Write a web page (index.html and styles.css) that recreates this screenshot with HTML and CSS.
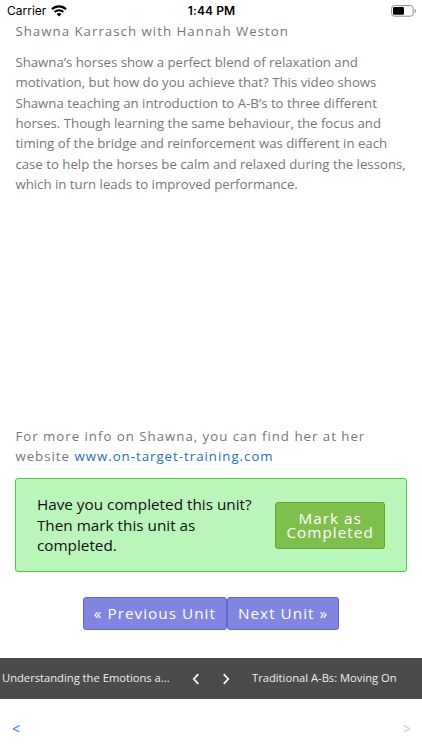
FILE: index.html
```html
<!DOCTYPE html>
<html lang="en">
<head>
    <meta charset="UTF-8">
    <meta name="viewport" content="width=device-width, initial-scale=1.0">
    <title>Shawna Karrasch with Hannah Weston</title>
    <link rel="stylesheet" href="styles.css">
</head>
<body>
    <header class="status-bar">
        <div class="carrier">
            <span>Carrier</span>
            <svg class="wifi" viewBox="0 0 16 12" width="16" height="12">
                <path d="M1 4.2a10 10 0 0 1 14 0" fill="none" stroke="#000" stroke-width="2.2"/>
                <path d="M3.6 7a6.3 6.3 0 0 1 8.8 0" fill="none" stroke="#000" stroke-width="2"/>
                <path d="M5.6 9.1a3.5 3.5 0 0 1 4.8 0L8 11.5z"/>
            </svg>
        </div>
        <div class="time">1:44 PM</div>
        <svg class="battery" viewBox="0 0 26 12" width="26" height="12">
            <rect x="0.6" y="0.6" width="21.6" height="10.6" rx="2.8" fill="none" stroke="#8e8e8e"/>
            <rect x="2" y="2" width="11" height="7.8" rx="1.4"/>
            <path d="M23.6 4v4c.9-.3 1.4-1 1.4-2s-.5-1.7-1.4-2z" fill="#999"/>
        </svg>
    </header>

    <main class="content">
        <h2 class="presenters">Shawna Karrasch with Hannah Weston</h2>
        <p class="description">Shawna’s horses show a perfect blend of relaxation and<br>
            motivation, but how do you achieve that? This video shows<br>
            Shawna teaching an introduction to A-B’s to three different<br>
            horses. Though learning the same behaviour, the focus and<br>
            timing of the bridge and reinforcement was different in each<br>
            case to help the horses be calm and relaxed during the lessons,<br>
            which in turn leads to improved performance.</p>

        <div class="video"></div>

        <p class="more-info">For more info on Shawna, you can find her at her<br>
            website <a href="#">www.on-target-training.com</a></p>

        <section class="complete-box">
            <p>Have you completed this unit?<br>Then mark this unit as<br>completed.</p>
            <button class="btn btn-complete">Mark as<br>Completed</button>
        </section>

        <nav class="unit-nav">
            <a class="btn btn-unit" href="#">« Previous Unit</a>
            <a class="btn btn-unit" href="#">Next Unit »</a>
        </nav>
    </main>

    <nav class="lesson-bar">
        <span class="lesson-prev">Understanding the Emotions a...</span>
        <svg class="chevron" viewBox="0 0 8 12" width="8" height="12">
            <path d="M6.3 1.2L1.8 6l4.5 4.8"/>
        </svg>
        <svg class="chevron" viewBox="0 0 8 12" width="8" height="12">
            <path d="M1.7 1.2L6.2 6l-4.5 4.8"/>
        </svg>
        <span class="lesson-next">Traditional A-Bs: Moving On</span>
    </nav>

    <footer class="browser-bar">
        <span class="back">&lt;</span>
        <span class="forward">&gt;</span>
    </footer>
</body>
</html>
```
FILE: styles.css
```css
* {
    margin: 0;
    padding: 0;
    box-sizing: border-box;
}

body {
    display: flex;
    flex-direction: column;
    height: 750px;
    overflow: hidden;
    background: #fff;
    color: #777;
    font-family: "Open Sans", sans-serif;
    font-size: 13.25px;
    line-height: 20.4px;
}

/* Status bar */
.status-bar {
    display: grid;
    grid-template-columns: 1fr auto 1fr;
    align-items: center;
    height: 20px;
    padding: 1px 6px 0 7px;
    color: #000;
    font-family: Inter, sans-serif;
    font-size: 12px;
}

.carrier {
    display: flex;
    align-items: center;
    gap: 5px;
}

.time {
    font-weight: 600;
    letter-spacing: 0.1px;
}

.battery {
    justify-self: end;
    margin-right: -1px;
}

/* Content */
.content {
    height: 638px;
    padding: 1px 15.4px 0;
}

.presenters,
.more-info {
    font-size: 13.25px;
    font-weight: 400;
    letter-spacing: 1.02px;
}

.description {
    margin-top: 10.4px;
    font-size: 13.23px;
    white-space: nowrap;
}

.video {
    height: 231px;
}

.more-info {
    letter-spacing: 0.99px;
}

.more-info a {
    color: #2a6fb0;
    text-decoration: none;
}

/* Completed box */
.complete-box {
    display: flex;
    justify-content: space-between;
    align-items: center;
    height: 94px;
    margin-top: 11.6px;
    padding: 0 20.5px;
    background: #baf5ba;
    border: 1px solid #4fc843;
    border-radius: 3px;
    color: #111;
    font-size: 15.3px;
}

.btn {
    border-radius: 3px;
    color: #fff;
    font-family: inherit;
    font-size: 15.3px;
    letter-spacing: 1.02px;
    text-align: center;
    text-decoration: none;
    white-space: nowrap;
}

.btn-complete {
    width: 110px;
    height: 47px;
    background: #7fbf4d;
    border: 1px solid #63a62f;
    line-height: 14.3px;
}

/* Unit buttons */
.unit-nav {
    display: flex;
    justify-content: center;
    margin-top: 25px;
}

.btn-unit {
    height: 33px;
    padding: 0 10px;
    background: #8085e0;
    border: 1px solid #6669cb;
    line-height: 31px;
}

/* Lesson bar */
.lesson-bar {
    display: flex;
    align-items: center;
    height: 41px;
    background: #4b4b4b;
    color: #eee;
    font-size: 11.2px;
    white-space: nowrap;
}

.lesson-prev {
    width: 168px;
    margin: 0 22px 0 2px;
}

.chevron {
    margin-right: 22px;
    fill: none;
    stroke: #fff;
    stroke-width: 1.7;
}

/* Browser controls */
.browser-bar {
    display: flex;
    justify-content: space-between;
    padding: 20px 11px 0 12px;
    font-size: 14px;
}

.back {
    color: #1478e8;
}

.forward {
    color: #ccc;
}
```
